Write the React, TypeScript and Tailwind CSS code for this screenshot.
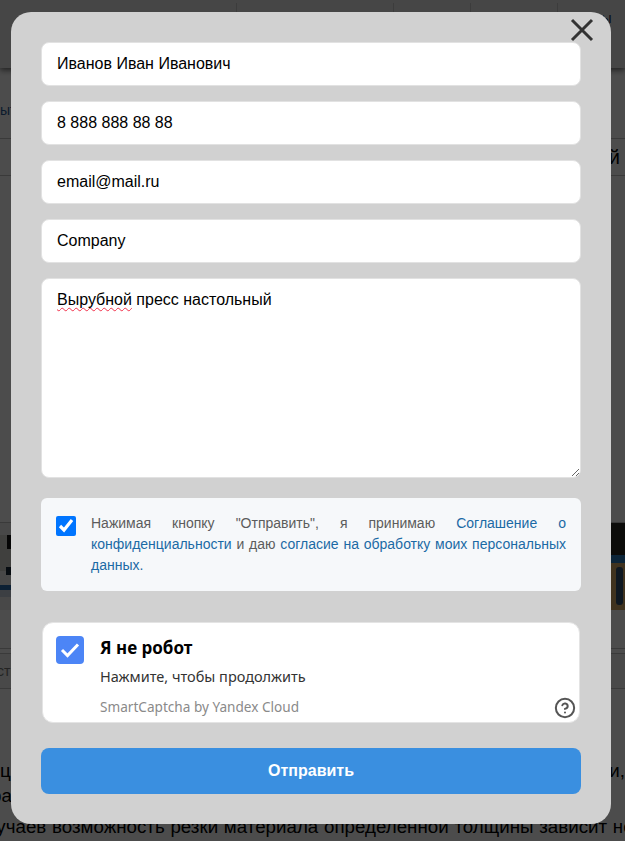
import React from 'react';
import { CircleHelp } from 'lucide-react';

const sans = { fontFamily: '"Liberation Sans", Arial, sans-serif' };

function Field({ value }: { value: string }) {
  return (
    <input
      readOnly
      value={value}
      className="w-full h-[44px] bg-white border border-[#e2e2e2] rounded-[8px] px-[15px] text-[16px] text-black outline-none"
    />
  );
}

function BackgroundPage() {
  return (
    <div className="h-[841px] overflow-hidden bg-white text-black">
      <header className="h-[68px] bg-[#ececec] shadow-[0_2px_6px_rgba(0,0,0,0.6)]">
        <div className="flex h-[30px] pt-[3px] text-[14px] leading-[30px]">
          <div className="w-[237px] h-[27px] border-r border-[#c8c8c8]" />
          <div className="w-[157px] h-[27px] border-r border-[#c8c8c8]" />
          <div className="w-[77px] h-[27px] border-r border-[#c8c8c8]" />
          <div className="w-[87px] h-[27px] border-r border-[#c8c8c8]" />
          <div className="flex-1 pl-[37px] text-[#12305a]">ты</div>
        </div>
      </header>
      <div className="h-[70px] flex items-end pb-[17px] text-[14px] text-[#2a5a96]">ыт</div>
      <div className="h-[38px] border-y border-[#c4c4c4] flex items-center justify-end pr-[5px] text-[20px]">й</div>
      <div className="h-[346px]" />
      <div className="h-[88px] border-y border-[#c4c4c4] flex justify-between">
        <svg width="11" height="87" viewBox="0 0 11 87">
          <rect x="0" y="0" width="11" height="87" fill="#f2f2f2" />
          <rect x="0" y="12" width="11" height="36" fill="#d8d8d0" />
          <rect x="7" y="12" width="4" height="14" fill="#111111" />
          <rect x="6" y="44" width="5" height="8" fill="#1a2a3a" />
          <rect x="0" y="62" width="11" height="5" fill="#2b6cb0" />
          <rect x="0" y="67" width="11" height="7" fill="#c8d4e0" />
        </svg>
        <svg width="14" height="87" viewBox="0 0 14 87">
          <rect x="0" y="0" width="14" height="34" fill="#2a2a22" />
          <rect x="0" y="32" width="14" height="8" fill="#2b7cc0" />
          <rect x="0" y="40" width="14" height="47" fill="#d8ac68" />
          <rect x="5" y="44" width="7" height="38" rx="3" fill="#33506e" />
        </svg>
      </div>
      <div className="h-[38px]" />
      <div className="h-[5px] border-t border-[#c4c4c4]" />
      <div className="h-[36px] bg-[#f4f4f4] border-y border-[#c4c4c4] flex items-center text-[14px] text-[#777777] -ml-[3px]">сти</div>
      <div className="pt-[68px] text-[18.75px] leading-[28px] whitespace-nowrap">
        <div className="flex justify-between h-[25px]">
          <span>ци</span>
          <span>ии,</span>
        </div>
        <div className="h-[31px] -ml-[9px]">ра</div>
        <div className="-ml-[24px] [word-spacing:0.5px]">случаев возможность резки материала определенной толщины зависит не</div>
      </div>
    </div>
  );
}

export default function App() {
  return (
    <div className="relative h-[841px] overflow-hidden" style={sans}>
      <BackgroundPage />
      <div className="absolute inset-0 bg-black/70" />
      <div className="absolute left-[11px] top-[12px] w-[600px] h-[812px] bg-[#d1d1d1] rounded-[20px] px-[30px] pt-[30px]">
        <button className="absolute right-[17px] top-[6px] text-[#333333]">
          <svg width="24" height="24" viewBox="0 0 24 24" fill="none" stroke="currentColor" strokeWidth="3">
            <path d="M2 2 L22 22 M22 2 L2 22" />
          </svg>
        </button>

        <div className="flex flex-col gap-[15px]">
          <Field value="Иванов Иван Иванович" />
          <Field value="8 888 888 88 88" />
          <Field value="email@mail.ru" />
          <Field value="Company" />
          <div className="relative h-[200px]">
            <textarea readOnly className="block w-full h-full bg-white border border-[#e2e2e2] rounded-[8px] outline-none resize-y" />
            <span className="absolute left-[16px] top-[13px] text-[16px] leading-[18px] text-black">
              <span className="underline decoration-wavy decoration-[#f0324b] decoration-1 underline-offset-2 [text-decoration-skip-ink:none]">Вырубной</span> пресс настольный
            </span>
          </div>
        </div>

        <div className="mt-[20px] h-[93px] bg-[#f6f8fa] rounded-[6px] flex pl-[15px] pr-[15px] pt-[15px]">
          <input type="checkbox" defaultChecked className="w-[20px] h-[20px] mt-[3px] shrink-0 accent-[#0075ff]" />
          <p className="ml-[15px] text-[14px] leading-[21px] text-[#5c5c5c] text-justify">
            Нажимая кнопку "Отправить", я принимаю{' '}
            <span className="text-[#1b6aa5]">Соглашение о конфиденциальности</span> и даю{' '}
            <span className="text-[#1b6aa5]">согласие на обработку моих персональных данных.</span>
          </p>
        </div>

        <div className="relative mt-[31px] mx-px h-[101px] bg-white rounded-[11px] border border-[#e4e4e4] flex pl-[13px] pt-[13px]" style={{ fontFamily: '"Noto Sans", sans-serif' }}>
          <div className="w-[28px] h-[28px] bg-[#4c85f6] rounded-[4px] flex items-center justify-center shrink-0">
            <svg width="20" height="16" viewBox="0 0 20 16" fill="none" stroke="white" strokeWidth="3">
              <path d="M2 8 L7.5 13.5 L18 2.5" />
            </svg>
          </div>
          <div className="ml-[16px] flex flex-col">
            <div className="text-[17px] leading-[24px] font-bold text-black">Я не робот</div>
            <div className="mt-[6px] text-[14.5px] leading-[20px] text-[#333333]">Нажмите, чтобы продолжить</div>
            <div className="mt-[11px] text-[13.6px] leading-[20px] text-[#8a8a8a]">SmartCaptcha by Yandex Cloud</div>
          </div>
          <CircleHelp className="absolute right-[3px] bottom-[3px] w-[22px] h-[22px] text-[#555555]" strokeWidth={2.2} />
        </div>

        <button className="mt-[25px] w-full h-[46px] bg-[#3a8fe0] rounded-[8px] text-white text-[16px] font-bold">
          Отправить
        </button>
      </div>
    </div>
  );
}
